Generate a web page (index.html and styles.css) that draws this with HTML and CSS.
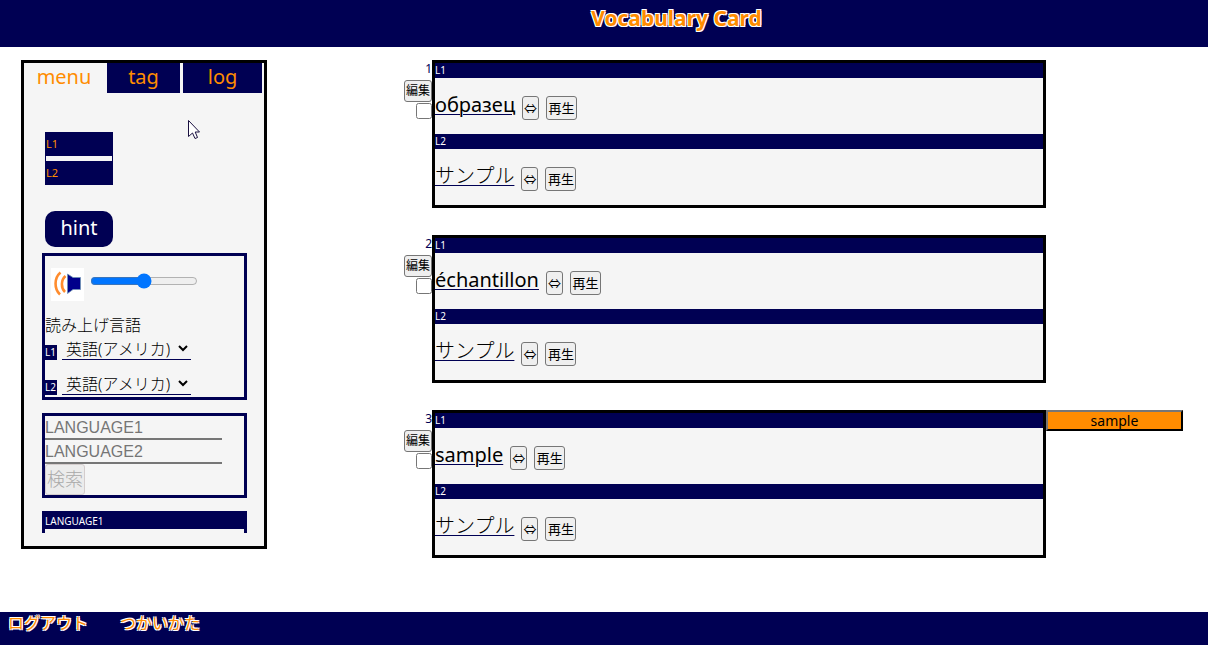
FILE: index.html
```html
<!DOCTYPE html>
<html lang="ja">
<head>
<meta charset="utf-8">
<title>Vocabulary Card</title>
<link rel="stylesheet" href="styles.css">
</head>
<body>
<header class="header"><h1 class="title">Vocabulary Card</h1></header>

<div class="page">
  <aside class="side">
    <nav class="tabs">
      <button type="button" class="tab tab-menu active">menu</button>
      <button type="button" class="tab tab-tag">tag</button>
      <button type="button" class="tab tab-log">log</button>
    </nav>
    <div class="side-scroll">
      <div class="toggles">
        <button type="button" class="toggle">L1</button>
        <div class="toggle-gap"></div>
        <button type="button" class="toggle">L2</button>
      </div>
      <button type="button" class="hint">hint</button>

      <section class="box voice">
        <div class="volume">
          <svg class="speaker" viewBox="0 0 33 33" aria-hidden="true">
            <rect width="33" height="33" fill="#fff"/>
            <path d="M9.500 4.500C3 10 3 21 9 26.500" fill="none" stroke="#ff8c2e" stroke-width="2.600"/>
            <path d="M14.500 8C9.800 12 9.800 20 14 24" fill="none" stroke="#ff8c2e" stroke-width="2.600"/>
            <path d="M16.500 6L22 9.500H29.500V21.500H22L16.500 25.500Z" fill="#00008b" stroke="#6f93b5" stroke-width=".8"/>
          </svg>
          <input class="range" type="range" min="0" max="100" value="50" aria-label="音量">
        </div>
        <p class="voice-title">読み上げ言語</p>
        <div class="voice-row">
          <label class="mark" for="voice1">L1</label>
          <select class="select" id="voice1"><option>英語(アメリカ)</option></select>
        </div>
        <div class="voice-row">
          <label class="mark" for="voice2">L2</label>
          <select class="select" id="voice2"><option>英語(アメリカ)</option></select>
        </div>
      </section>

      <form class="box search">
        <input class="field" type="text" placeholder="LANGUAGE1" aria-label="LANGUAGE1">
        <input class="field" type="text" placeholder="LANGUAGE2" aria-label="LANGUAGE2">
        <button type="submit" class="search-button" disabled>検索</button>
      </form>

      <section class="box entry"><h2 class="bar">LANGUAGE1</h2></section>
    </div>
    <svg class="pointer" viewBox="0 0 12 20" aria-hidden="true">
      <path d="M.5.500V16.500L4.500 13L7 18.500L9.500 17.500L7.200 12H11.500Z" fill="#fff" stroke="#1a1040"/>
    </svg>
  </aside>

  <main class="cards">
    <article class="row">
      <div class="tools">
        <label class="number" for="check1">1</label>
        <button type="button" class="button edit">編集</button>
        <input class="check" type="checkbox" id="check1">
      </div>
      <div class="card">
        <h2 class="bar">L1</h2>
        <div class="word"><a class="term" href="#">образец</a><button type="button" class="button swap">⇔</button><button type="button" class="button play">再生</button></div>
        <h2 class="bar">L2</h2>
        <div class="word"><a class="term term-ja" href="#">サンプル</a><button type="button" class="button swap">⇔</button><button type="button" class="button play">再生</button></div>
      </div>
      <div class="labels"></div>
    </article>
    <article class="row">
      <div class="tools">
        <label class="number" for="check2">2</label>
        <button type="button" class="button edit">編集</button>
        <input class="check" type="checkbox" id="check2">
      </div>
      <div class="card">
        <h2 class="bar">L1</h2>
        <div class="word"><a class="term" href="#">échantillon</a><button type="button" class="button swap">⇔</button><button type="button" class="button play">再生</button></div>
        <h2 class="bar">L2</h2>
        <div class="word"><a class="term term-ja" href="#">サンプル</a><button type="button" class="button swap">⇔</button><button type="button" class="button play">再生</button></div>
      </div>
      <div class="labels"></div>
    </article>
    <article class="row">
      <div class="tools">
        <label class="number" for="check3">3</label>
        <button type="button" class="button edit">編集</button>
        <input class="check" type="checkbox" id="check3">
      </div>
      <div class="card">
        <h2 class="bar">L1</h2>
        <div class="word"><a class="term" href="#">sample</a><button type="button" class="button swap">⇔</button><button type="button" class="button play">再生</button></div>
        <h2 class="bar">L2</h2>
        <div class="word"><a class="term term-ja" href="#">サンプル</a><button type="button" class="button swap">⇔</button><button type="button" class="button play">再生</button></div>
      </div>
      <div class="labels"><button type="button" class="label">sample</button></div>
    </article>
  </main>
</div>

<footer class="footer">
  <a class="footer-link" href="#">ログアウト</a>
  <a class="footer-link" href="#">つかいかた</a>
</footer>
</body>
</html>
```
FILE: styles.css
```css
:root {
  --navy: #000053;
  --orange: #ff8c00;
  --panel: #f5f5f5;
  --font: "Noto Sans", "Noto Sans CJK JP", sans-serif;
}

* {
  box-sizing: border-box;
}

body {
  display: flex;
  flex-direction: column;
  min-height: 100vh;
  margin: 0;
  font-family: var(--font);
  font-size: 16px;
  color: #000;
  background: #fff;
}

button,
input,
select {
  margin: 0;
  font-family: inherit;
}

.header {
  padding: 3px 0 14px 145px;
  background: var(--navy);
  text-align: center;
}

.title,
.footer-link {
  color: var(--orange);
  text-shadow: 1px 1px 0 #fff, -1px 1px 0 #fff, 1px -1px 0 #fff, -1px -1px 0 #fff;
}

.title {
  margin: 0;
  font-size: 21px;
  line-height: 30px;
}

.page {
  display: flex;
  flex: 1;
  align-items: flex-start;
  padding: 13px 25px 54px 21px;
}

/* side panel */
.side {
  position: relative;
  flex: none;
  width: 246px;
  padding-bottom: 13px;
  border: 3px solid #000;
  background: var(--panel);
}

.tabs {
  display: flex;
  padding-right: 2px;
}

.tab {
  height: 30px;
  padding: 0 0 2px;
  border: 0;
  background: var(--navy);
  color: var(--orange);
  font-size: 20px;
  line-height: 28px;
}

.tab-menu {
  width: 83px;
  padding-right: 3px;
}

.tab-tag {
  width: 73px;
  margin-right: 3px;
}

.tab-log {
  flex: 1;
}

.tab.active {
  background: var(--panel);
}

.side-scroll {
  height: 440px;
  padding: 39px 17px 0 18px;
  overflow: hidden;
}

.toggles {
  width: 68px;
  margin-left: 3px;
  padding: 0 1px;
  background: var(--navy);
}

.toggle {
  display: block;
  width: 100%;
  height: 24px;
  padding: 0 0 2px;
  border: 0;
  background: transparent;
  color: var(--orange);
  font-size: 11px;
  text-align: left;
}

.toggle-gap {
  height: 5px;
  background: var(--panel);
}

.hint {
  display: block;
  width: 68px;
  height: 36px;
  margin: 26px 0 6px 3px;
  padding: 0 0 2px;
  border: 0;
  border-radius: 10px;
  background: var(--navy);
  color: #fff;
  font-size: 20px;
  line-height: 32px;
}

.box {
  margin-bottom: 13px;
  border: 3px solid var(--navy);
}

.volume {
  display: flex;
  gap: 6px;
  padding: 12px 6px 0;
}

.speaker {
  width: 33px;
  height: 33px;
}

.range {
  width: 108px;
  height: 16px;
  margin-top: 5px;
}

.voice-title {
  margin: 12px 0 0;
  font-weight: 300;
  line-height: 24px;
}

.voice-row {
  display: flex;
  align-items: flex-end;
  gap: 5px;
  height: 23px;
}

.voice-row + .voice-row {
  margin: 12px 0 2px;
}

.mark {
  width: 12px;
  height: 15px;
  background: var(--navy);
  color: #fff;
  font-size: 10px;
  line-height: 15px;
}

.select {
  width: 129px;
  height: 23px;
  padding: 0;
  border: 0;
  border-bottom: 1px solid var(--navy);
  background: transparent;
  color: #000;
  font-size: 16px;
  font-weight: 300;
}

.search {
  display: flex;
  flex-direction: column;
  align-items: flex-start;
}

.field {
  width: 177px;
  height: 24px;
  padding: 2px 0 0;
  border: 0;
  border-bottom: 2px solid #767676;
  background: transparent;
  font-family: "Liberation Sans", Arial, sans-serif;
  font-size: 16px;
}

.search-button {
  width: 40px;
  height: 31px;
  padding: 0 0 2px;
  border: 1px solid #d4cdcd;
  border-radius: 3px;
  background: #ececec;
  color: #a9a9a9;
  font-size: 18px;
  font-weight: 300;
  line-height: 26px;
}

.entry {
  min-height: 80px;
  margin: 0;
}

.bar {
  height: 15px;
  margin: 0;
  background: var(--navy);
  color: #fff;
  font-size: 10px;
  font-weight: 400;
  line-height: 15px;
}

.pointer {
  position: absolute;
  top: 57px;
  left: 164px;
  width: 12px;
  height: 20px;
}

/* cards */
.cards {
  display: flex;
  flex: 1;
  flex-direction: column;
  gap: 27px;
  min-width: 0;
  margin-left: 137px;
}

.row {
  display: flex;
  align-items: flex-start;
}

.tools {
  display: flex;
  flex: none;
  flex-direction: column;
  align-items: flex-end;
  width: 28px;
}

.number {
  color: var(--navy);
  font-size: 12px;
  line-height: 18px;
}

.button {
  padding: 0;
  border: 1px solid #767676;
  border-radius: 3px;
  background: #efefef;
  color: #000;
  font-size: 13px;
}

.edit {
  width: 28px;
  height: 22px;
  margin-top: 2px;
  font-size: 12px;
  line-height: 18px;
}

.check {
  width: 16px;
  height: 16px;
  margin-top: 1px;
}

.card {
  flex: 1;
  min-width: 0;
  border: 3px solid #000;
  background: var(--panel);
}

.word {
  display: flex;
  align-items: flex-start;
  height: 56px;
  padding-top: 12px;
}

.term {
  margin-right: 7px;
  color: #000;
  font-size: 20px;
  line-height: 30px;
  text-decoration: underline;
  text-decoration-color: var(--navy);
  text-decoration-thickness: 1px;
  text-underline-offset: 2px;
}

.term-ja {
  font-weight: 300;
}

.swap,
.play {
  height: 24px;
  margin-top: 6px;
  line-height: 20px;
}

.swap {
  width: 17px;
  margin-right: 7px;
  font-family: "Noto Sans CJK JP", sans-serif;
}

.play {
  width: 31px;
}

.labels {
  flex: none;
  width: 137px;
}

.label {
  display: block;
  width: 100%;
  height: 21px;
  padding: 0;
  border: 2px outset #000;
  border-color: #767676 #111 #111 #767676;
  background: var(--orange);
  color: #000;
  font-size: 14px;
  line-height: 17px;
}

.footer {
  display: flex;
  gap: 32px;
  height: 33px;
  padding: 0 8px;
  background: var(--navy);
}

.footer-link {
  font-size: 16px;
  line-height: 22px;
  text-decoration: none;
}
```
